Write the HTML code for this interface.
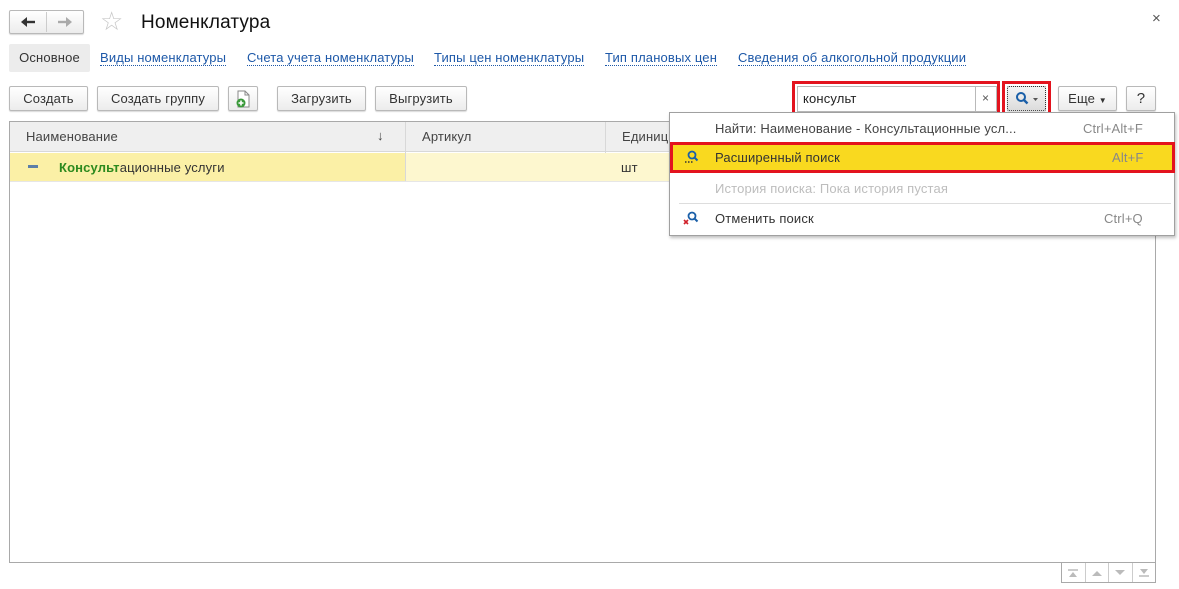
<!DOCTYPE html>
<html><head><meta charset="utf-8"><style>
*{box-sizing:border-box;margin:0;padding:0}
body{width:1179px;height:589px;background:#fff;font-family:"Liberation Sans",Arial,sans-serif;font-size:13px;color:#333;position:relative;overflow:hidden;letter-spacing:0.15px}
.a{position:absolute}
.btn{position:absolute;height:25px;border:1px solid #b9b9b9;border-radius:2px;background:linear-gradient(#fff,#ececec);box-shadow:0 1px 1px rgba(0,0,0,.15);text-align:center;line-height:23px;color:#333;font-size:13px}
.lnk{position:absolute;top:50px;color:#1d58a8;border-bottom:1px dotted #1d58a8;line-height:15px}
.red{position:absolute;border:3px solid #e3131e}
.pg{flex:1;border-right:1px solid #ccc;display:flex;align-items:center;justify-content:center}
</style></head><body>
<!-- nav -->
<div class="btn" style="left:9px;top:10px;width:75px;height:24px"></div>
<div class="a" style="left:46px;top:12px;width:1px;height:20px;background:#ccc"></div>
<svg class="a" style="left:20px;top:16px" width="16" height="12" viewBox="0 0 16 12"><path d="M15 6H4" stroke="#333" stroke-width="2.4"/><path d="M1 6l6-5v10z" fill="#333"/></svg>
<svg class="a" style="left:57px;top:16px" width="16" height="12" viewBox="0 0 16 12"><path d="M1 6h11" stroke="#aaa" stroke-width="2.4"/><path d="M15 6l-6-5v10z" fill="#aaa"/></svg>
<div class="a" style="left:100px;top:8px;font-size:26px;color:#c8c8c8;line-height:26px">&#9734;</div>
<div class="a" style="left:141px;top:12px;font-size:19px;color:#111">Номенклатура</div>
<div class="a" style="left:1152px;top:10px;font-size:15px;color:#555">×</div>
<!-- tabs -->
<div class="a" style="left:9px;top:44px;width:81px;height:28px;background:#ececec;border-radius:2px;line-height:28px;text-align:center;color:#333">Основное</div>
<div class="lnk" style="left:100px">Виды номенклатуры</div>
<div class="lnk" style="left:247px">Счета учета номенклатуры</div>
<div class="lnk" style="left:434px">Типы цен номенклатуры</div>
<div class="lnk" style="left:605px">Тип плановых цен</div>
<div class="lnk" style="left:738px">Сведения об алкогольной продукции</div>
<!-- toolbar -->
<div class="btn" style="left:9px;top:86px;width:79px">Создать</div>
<div class="btn" style="left:97px;top:86px;width:122px">Создать группу</div>
<div class="btn" style="left:228px;top:86px;width:30px"><svg width="16" height="18" viewBox="0 0 16 18" style="margin-top:3px"><path d="M3 1h7l4 4v12H3z" fill="#fff" stroke="#888"/><path d="M10 1v4h4" fill="none" stroke="#888"/><circle cx="6" cy="13" r="4.5" fill="#3a9a3a"/><path d="M6 10.5v5M3.5 13h5" stroke="#fff" stroke-width="1.6"/></svg></div>
<div class="btn" style="left:277px;top:86px;width:89px">Загрузить</div>
<div class="btn" style="left:375px;top:86px;width:92px">Выгрузить</div>
<!-- search -->
<div class="red" style="left:792px;top:81px;width:208px;height:35px"></div>
<div class="a" style="left:797px;top:86px;width:200px;height:26px;border:1px solid #b9b9b9;background:#fff;padding-left:5px;line-height:24px;color:#222">консульт</div>
<div class="a" style="left:975px;top:86px;width:1px;height:26px;background:#b9b9b9"></div>
<div class="a" style="left:982px;top:91px;font-size:12px;color:#555">×</div>
<div class="red" style="left:1002px;top:81px;width:49px;height:35px"></div>
<div class="btn" style="left:1007px;top:86px;width:39px;height:25px;border:1px dotted #333;background:linear-gradient(#f4f4f4,#dcdcdc)"><svg width="28" height="16" viewBox="0 0 28 16" style="margin-top:4px"><circle cx="8" cy="6" r="4" fill="none" stroke="#1a5fa8" stroke-width="2"/><path d="M11 9l3.5 3.5" stroke="#1a5fa8" stroke-width="2.4"/><path d="M20 7h5l-2.5 3z" fill="#555"/></svg></div>
<div class="btn" style="left:1058px;top:86px;width:59px">Еще <span style="font-size:8px">&#9660;</span></div>
<div class="btn" style="left:1126px;top:86px;width:30px;font-size:15px">?</div>
<!-- table -->
<div class="a" style="left:9px;top:121px;width:1147px;height:442px;border:1px solid #a9a9a9"></div>
<div class="a" style="left:10px;top:122px;width:1145px;height:30px;background:#efefef;border-bottom:1px solid #d8d8d8"></div>
<div class="a" style="left:405px;top:122px;width:1px;height:59px;background:#d8d8d8"></div>
<div class="a" style="left:605px;top:122px;width:1px;height:59px;background:#d8d8d8"></div>
<div class="a" style="left:26px;top:129px;color:#444">Наименование</div>
<div class="a" style="left:377px;top:128px;color:#444">&#8595;</div>
<div class="a" style="left:422px;top:129px;color:#444">Артикул</div>
<div class="a" style="left:622px;top:129px;color:#444">Единиц</div>
<div class="a" style="left:10px;top:153px;width:395px;height:28px;background:#fbf0a6"></div>
<div class="a" style="left:406px;top:153px;width:749px;height:28px;background:#fdf7cf"></div>
<div class="a" style="left:10px;top:181px;width:1145px;height:1px;background:#e6e6e6"></div>
<div class="a" style="left:28px;top:165px;width:10px;height:3px;background:#5c7fa8"></div>
<div class="a" style="left:59px;top:160px;color:#333"><b style="color:#2d8a1e">Консульт</b>ационные услуги</div>
<div class="a" style="left:621px;top:160px;color:#333">шт</div>
<!-- bottom nav -->
<div class="a" style="left:1061px;top:562px;width:95px;height:21px;border:1px solid #a9a9a9;display:flex">
<div class="pg"><svg width="10" height="8" viewBox="0 0 10 8"><path d="M0 1h10" stroke="#bbb" stroke-width="1.5"/><path d="M1 8l4-5 4 5z" fill="#bbb"/></svg></div>
<div class="pg"><svg width="10" height="6" viewBox="0 0 10 6"><path d="M0 6l5-5 5 5z" fill="#bbb"/></svg></div>
<div class="pg"><svg width="10" height="6" viewBox="0 0 10 6"><path d="M0 0l5 5 5-5z" fill="#bbb"/></svg></div>
<div class="pg" style="border-right:none"><svg width="10" height="8" viewBox="0 0 10 8"><path d="M0 7h10" stroke="#bbb" stroke-width="1.5"/><path d="M1 0l4 5 4-5z" fill="#bbb"/></svg></div>
</div>
<!-- dropdown -->
<div class="a" style="left:669px;top:112px;width:506px;height:124px;background:#fff;border:1px solid #a0a0a0;box-shadow:1px 2px 3px rgba(0,0,0,.25)"></div>
<div class="a" style="left:715px;top:121px;color:#444">Найти: Наименование - Консультационные усл...</div>
<div class="a" style="left:1083px;top:121px;color:#888">Ctrl+Alt+F</div>
<div class="a" style="left:670px;top:142px;width:504px;height:30px;background:#f9d91f"></div>
<div class="red" style="left:670px;top:142px;width:505px;height:31px"></div>
<svg class="a" style="left:684px;top:149px" width="16" height="16" viewBox="0 0 16 16"><circle cx="8" cy="6" r="3.5" fill="none" stroke="#1a5fa8" stroke-width="1.8"/><path d="M10.5 8.5l3 3" stroke="#1a5fa8" stroke-width="2"/><path d="M1 13h1.5M4 13h1.5M7 13h1.5" stroke="#333" stroke-width="1.5"/></svg>
<div class="a" style="left:715px;top:150px;color:#333">Расширенный поиск</div>
<div class="a" style="left:1112px;top:150px;color:#888">Alt+F</div>
<div class="a" style="left:715px;top:181px;color:#bdbdbd">История поиска: Пока история пустая</div>
<div class="a" style="left:679px;top:203px;width:492px;height:1px;background:#ddd"></div>
<svg class="a" style="left:683px;top:210px" width="16" height="16" viewBox="0 0 16 16"><circle cx="9" cy="6" r="3.5" fill="none" stroke="#1a5fa8" stroke-width="1.8"/><path d="M11.5 8.5l3 3" stroke="#1a5fa8" stroke-width="2"/><path d="M1 10l4 4M5 10l-4 4" stroke="#d0202a" stroke-width="1.6"/></svg>
<div class="a" style="left:715px;top:211px;color:#333">Отменить поиск</div>
<div class="a" style="left:1104px;top:211px;color:#888">Ctrl+Q</div>
</body></html>
